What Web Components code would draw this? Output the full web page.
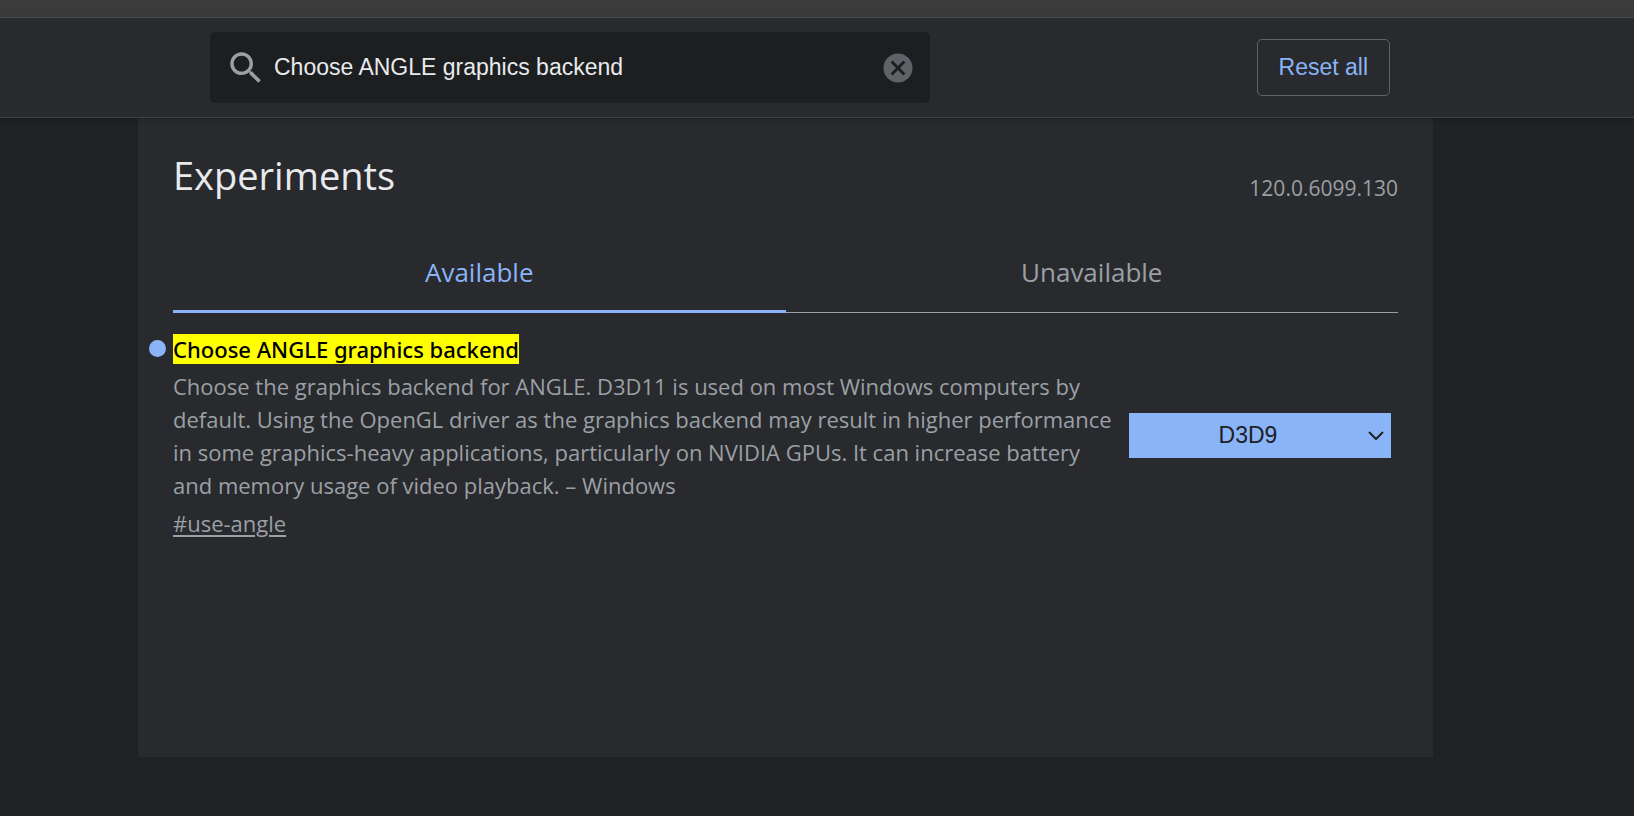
<!DOCTYPE html>
<html lang="en">
<head>
<meta charset="utf-8">
<meta name="viewport" content="width=device-width, initial-scale=1">
<title>Experiments</title>
<style>
  html, body { margin: 0; height: 100%; }
  body {
    background: #202124;
    color: #e8eaed;
    font-family: "Open Sans", "Noto Sans", sans-serif;
  }
</style>
</head>
<body>
<flags-app></flags-app>

<template id="flags-app">
  <style>
    :host {
      --page-width: 1295px;
      --page-end: 63px;
      --surface: #292a2d;
      --line: #3f4244;
      --accent: #8ab4f8;
      --muted: #9aa0a6;
      display: flex;
      flex-direction: column;
      min-height: 100vh;
    }
    .strip { height: 17px; background: #3b3b3b; }
    main {
      flex: 1;
      display: flex;
      justify-content: center;
      padding: 0 var(--page-end) 59px 0;
    }
    .panel {
      box-sizing: border-box;
      width: 100%;
      max-width: var(--page-width);
      padding: 30px 35px;
      background: var(--surface);
    }
    .heading {
      display: flex;
      justify-content: space-between;
      align-items: flex-end;
      margin-bottom: 36px;
    }
    h1 { margin: 0; font-size: 38px; line-height: 54px; font-weight: 400; }
    .version { font-size: 21px; line-height: 28px; color: var(--muted); }
  </style>
  <div class="strip"></div>
  <flags-toolbar></flags-toolbar>
  <main>
    <div class="panel">
      <div class="heading">
        <h1>Experiments</h1>
        <span class="version">120.0.6099.130</span>
      </div>
      <flags-tabs></flags-tabs>
      <flag-experiment anchor="use-angle">
        <mark slot="name">Choose ANGLE graphics backend</mark>
        Choose the graphics backend for ANGLE. D3D11 is used on most Windows computers by default. Using the OpenGL driver as the graphics backend may result in higher performance in some graphics-heavy applications, particularly on NVIDIA GPUs. It can increase battery and memory usage of video playback. – Windows
      </flag-experiment>
    </div>
  </main>
</template>

<template id="flags-toolbar">
  <style>
    :host {
      display: flex;
      justify-content: center;
      position: relative;
      padding-right: var(--page-end);
      background: var(--surface);
      border-top: 1px solid #474a48;
      border-bottom: 1px solid var(--line);
      box-shadow: 0 2px 4px rgba(0, 0, 0, .2);
    }
    .bar {
      box-sizing: border-box;
      width: 100%;
      max-width: var(--page-width);
      display: flex;
      align-items: center;
      justify-content: space-between;
      gap: 24px;
      padding: 14px 43px 14px 72px;
    }
    button.reset {
      height: 57px;
      padding: 0 21px;
      background: none;
      border: 1px solid #5f6368;
      border-radius: 5px;
      color: var(--accent);
      font: 23px "Liberation Sans", Arial, sans-serif;
      white-space: nowrap;
    }
  </style>
  <div class="bar">
    <search-field></search-field>
    <button class="reset" type="button">Reset all</button>
  </div>
</template>

<template id="search-field">
  <style>
    :host {
      flex: 0 1 720px;
      min-width: 0;
      box-sizing: border-box;
      height: 71px;
      display: flex;
      align-items: center;
      padding: 0 17px 0 15px;
      background: #1d1e20;
      border-radius: 5px;
    }
    .glass { flex: none; width: 42px; height: 42px; }
    input {
      flex: 1;
      min-width: 0;
      padding: 0 7px;
      border: 0;
      outline: 0;
      background: none;
      color: #e8eaed;
      font: 23px "Liberation Sans", Arial, sans-serif;
    }
    button { flex: none; padding: 0; border: 0; background: none; display: flex; }
  </style>
  <svg class="glass" viewBox="0 0 24 24" fill="#9aa0a6" aria-hidden="true">
    <path d="M15.5 14h-.79l-.28-.27C15.41 12.59 16 11.11 16 9.5 16 5.91 13.09 3 9.5 3S3 5.91 3 9.5 5.91 16 9.5 16c1.61 0 3.09-.59 4.23-1.57l.27.28v.79l5 4.99L20.49 19l-4.99-5zm-6 0C7.01 14 5 11.99 5 9.5S7.01 5 9.5 5 14 7.01 14 9.5 11.99 14 9.5 14z"/>
  </svg>
  <input type="text" aria-label="Search flags" value="Choose ANGLE graphics backend">
  <button type="button" aria-label="Clear search">
    <svg width="30" height="30" viewBox="0 0 30 30" aria-hidden="true">
      <circle cx="15" cy="15" r="14.5" fill="#5f6368"/>
      <path d="M8.6 8.6 21.4 21.4M21.4 8.6 8.6 21.4" stroke="#1d1e20" stroke-width="2.8"/>
    </svg>
  </button>
</template>

<template id="flags-tabs">
  <style>
    :host { display: flex; }
    button {
      flex: 1 1 0;
      padding: 16px 0 23px;
      background: none;
      border: 0;
      box-shadow: inset 0 -1px var(--muted);
      color: var(--muted);
      font: 26px/36px "Open Sans", "Noto Sans", sans-serif;
    }
    button[aria-selected="true"] {
      color: var(--accent);
      box-shadow: inset 0 -3px var(--accent);
    }
  </style>
  <button type="button" role="tab" aria-selected="true">Available</button>
  <button type="button" role="tab" aria-selected="false">Unavailable</button>
</template>

<template id="flag-experiment">
  <style>
    :host {
      display: grid;
      grid-template-columns: 18px minmax(0, 1fr) auto;
      column-gap: 6px;
      margin: 20px 7px 0 -24px;
      font-size: 22px;
      line-height: 33px;
      color: var(--muted);
    }
    .dot { width: 17px; height: 17px; margin-top: 7px; border-radius: 50%; background: var(--accent); }
    .text { max-width: 940px; }
    h2 { margin: 0; font: 500 22px/33px "Noto Sans", "Open Sans", sans-serif; }
    ::slotted(mark) { background: #ff0; color: #000; }
    p { margin: 4px 0 5px; }
    a { color: inherit; text-decoration-thickness: 2px; text-underline-offset: 3px; }
    .choice { align-self: center; position: relative; display: flex; margin-bottom: 3px; }
    select {
      appearance: none;
      width: 262px;
      height: 45px;
      margin: 0;
      padding: 0 24px 0 0;
      border: 0;
      border-radius: 0;
      background: var(--accent);
      color: #202124;
      font: 23px "Liberation Sans", Arial, sans-serif;
      text-align: center;
      text-align-last: center;
    }
    .choice svg { position: absolute; right: 6px; top: 17px; pointer-events: none; }
  </style>
  <span class="dot"></span>
  <div class="text">
    <h2 id="name"><slot name="name"></slot></h2>
    <p><slot></slot></p>
    <a></a>
  </div>
  <div class="choice">
    <select aria-labelledby="name">
      <option>Default</option>
      <option>OpenGL</option>
      <option>D3D11</option>
      <option selected>D3D9</option>
      <option>D3D11on12</option>
    </select>
    <svg width="18" height="12" viewBox="0 0 18 12" fill="none" stroke="#202124" stroke-width="2" aria-hidden="true">
      <path d="M2 2 9 9 16 2"/>
    </svg>
  </div>
</template>

<script>
  class TemplateElement extends HTMLElement {
    constructor() {
      super();
      const template = document.getElementById(this.localName);
      this.attachShadow({ mode: "open" }).append(template.content.cloneNode(true));
    }
  }

  class SearchField extends TemplateElement {
    connectedCallback() {
      const input = this.shadowRoot.querySelector("input");
      this.shadowRoot.querySelector("button").onclick = () => {
        input.value = "";
        input.focus();
      };
    }
  }

  class FlagsTabs extends TemplateElement {
    connectedCallback() {
      this.setAttribute("role", "tablist");
      const tabs = [...this.shadowRoot.querySelectorAll("button")];
      for (const tab of tabs) {
        tab.onclick = () => tabs.forEach(t => t.setAttribute("aria-selected", String(t === tab)));
      }
    }
  }

  class FlagExperiment extends TemplateElement {
    connectedCallback() {
      const hash = "#" + this.getAttribute("anchor");
      const link = this.shadowRoot.querySelector("a");
      link.href = hash;
      link.textContent = hash;
    }
  }

  customElements.define("search-field", SearchField);
  customElements.define("flags-toolbar", class extends TemplateElement {});
  customElements.define("flags-tabs", FlagsTabs);
  customElements.define("flag-experiment", FlagExperiment);
  customElements.define("flags-app", class extends TemplateElement {});
</script>
</body>
</html>
